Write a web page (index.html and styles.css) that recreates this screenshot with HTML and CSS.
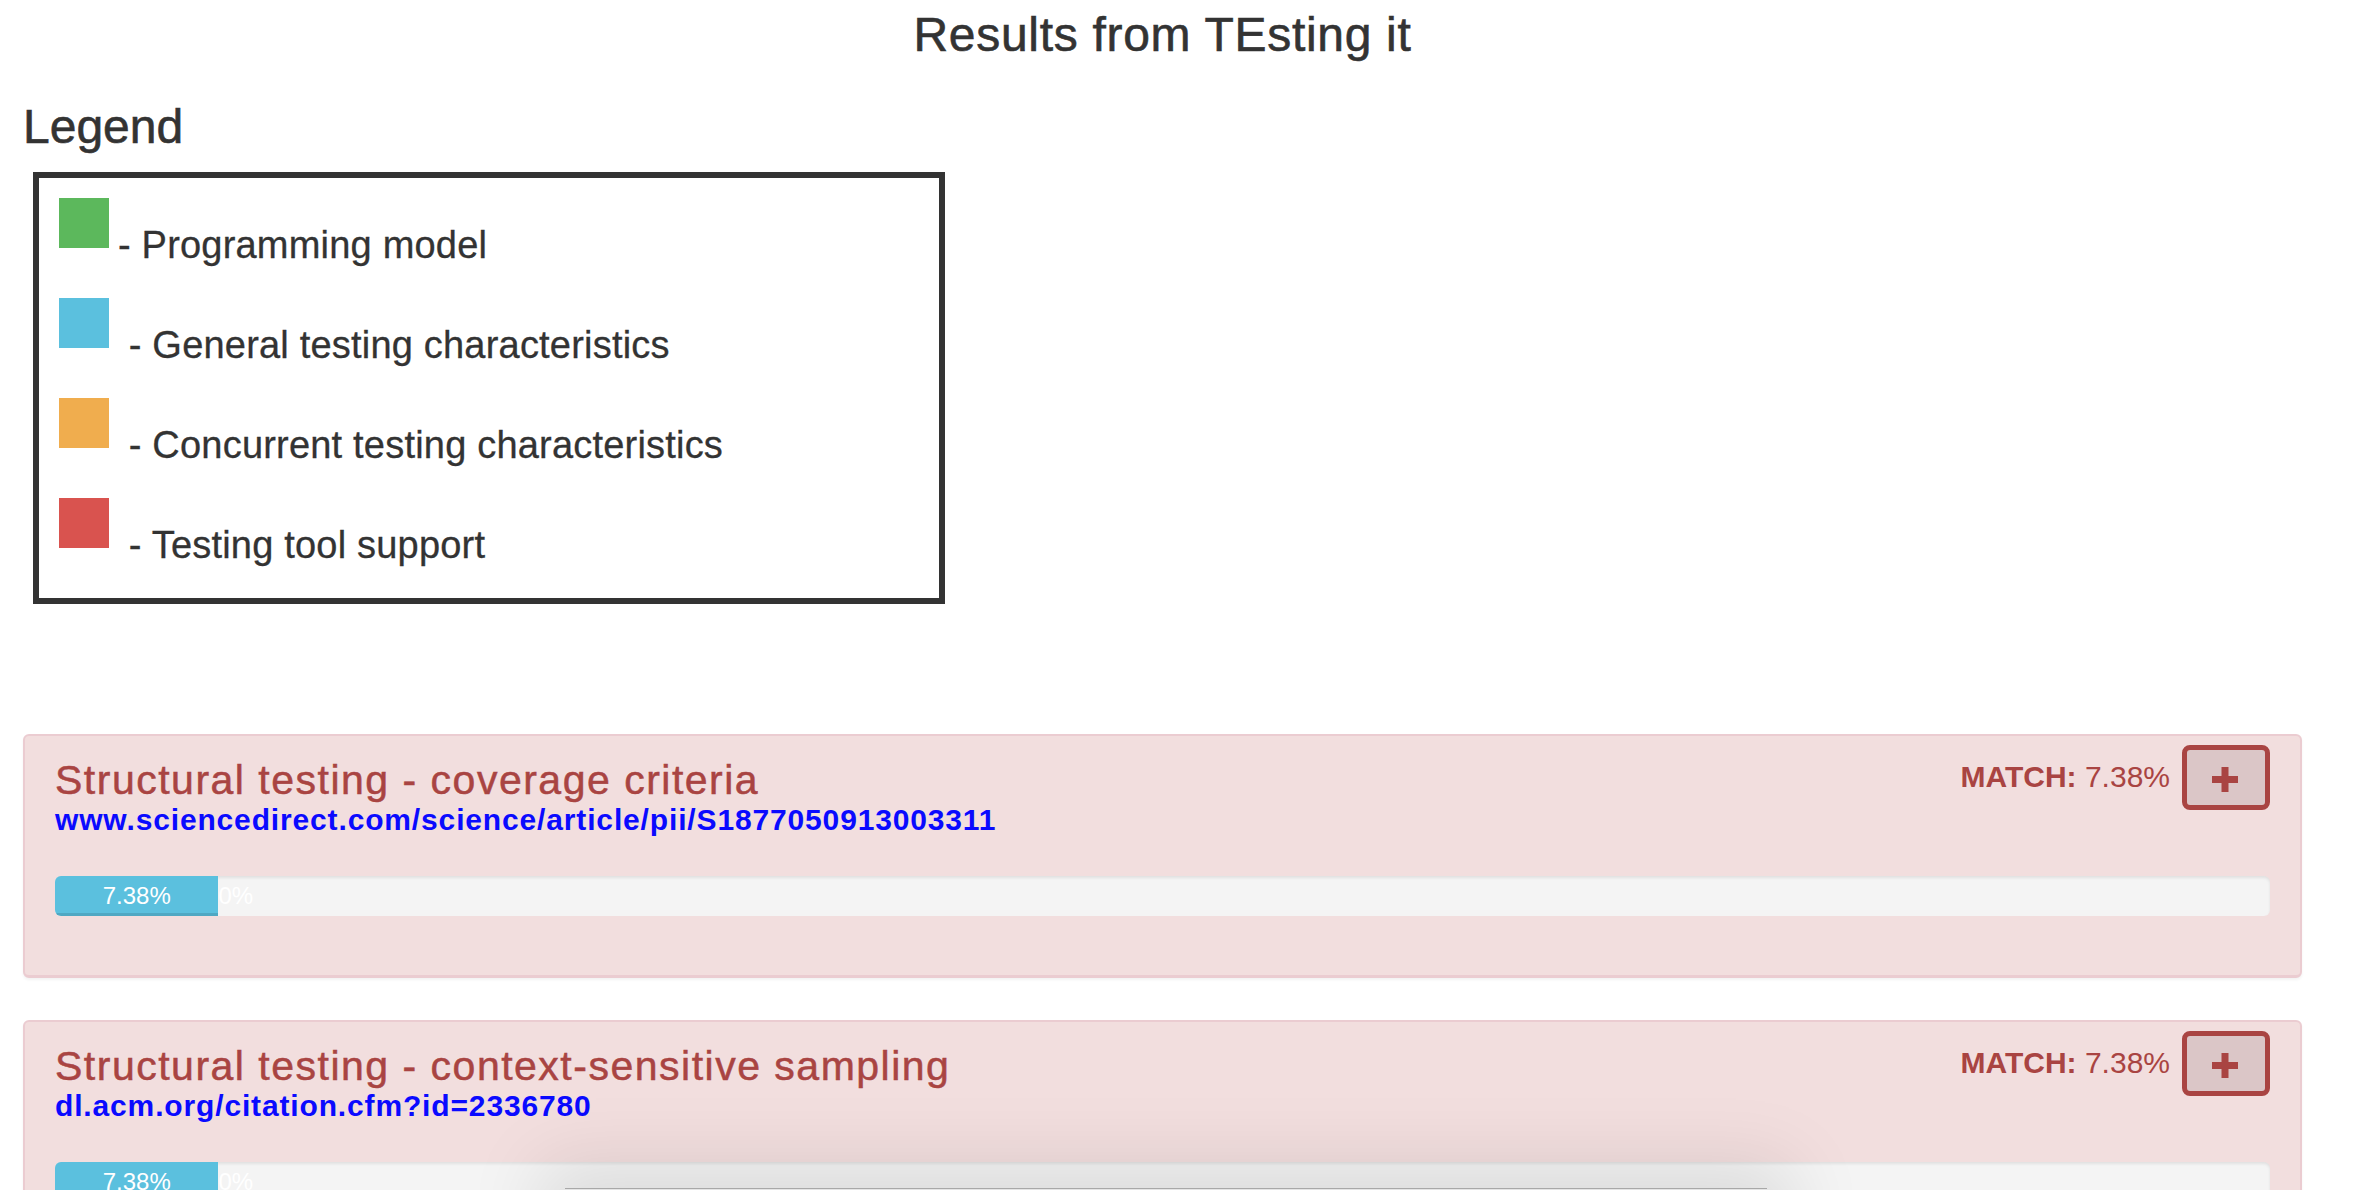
FILE: index.html
```html
<!DOCTYPE html>
<html lang="en">
<head>
    <meta charset="UTF-8">
    <meta name="viewport" content="width=device-width, initial-scale=1.0">
    <title>Results from TEsting it</title>
    <link rel="stylesheet" href="styles.css">
</head>
<body>
    <div class="container">
        <h1>Results from TEsting it</h1>

        <h2>Legend</h2>
        <div class="legend">
            <div class="legend-item"><span class="swatch green"></span>- Programming model</div>
            <div class="legend-item"><span class="swatch blue"></span> - General testing characteristics</div>
            <div class="legend-item"><span class="swatch orange"></span> - Concurrent testing characteristics</div>
            <div class="legend-item"><span class="swatch red"></span> - Testing tool support</div>
        </div>

        <div class="result">
            <div class="result-head">
                <div class="result-info">
                    <h3>Structural testing - coverage criteria</h3>
                    <a class="result-link" href="#">www.sciencedirect.com/science/article/pii/S1877050913003311</a>
                </div>
                <div class="match">
                    <span><strong>MATCH:</strong> 7.38%</span>
                    <button class="expand" aria-label="Expand">
                        <svg width="26" height="25" viewBox="0 0 26 25"><rect x="0" y="9" width="26" height="7"/><rect x="9.5" y="0" width="7" height="25"/></svg>
                    </button>
                </div>
            </div>
            <div class="progress">
                <div class="progress-bar info" style="width: 7.38%">7.38%</div>
                <div class="progress-bar empty">0%</div>
            </div>
        </div>

        <div class="result">
            <div class="result-head">
                <div class="result-info">
                    <h3>Structural testing - context-sensitive sampling</h3>
                    <a class="result-link" href="#">dl.acm.org/citation.cfm?id=2336780</a>
                </div>
                <div class="match">
                    <span><strong>MATCH:</strong> 7.38%</span>
                    <button class="expand" aria-label="Expand">
                        <svg width="26" height="25" viewBox="0 0 26 25"><rect x="0" y="9" width="26" height="7"/><rect x="9.5" y="0" width="7" height="25"/></svg>
                    </button>
                </div>
            </div>
            <div class="progress">
                <div class="progress-bar info" style="width: 7.38%">7.38%</div>
                <div class="progress-bar empty">0%</div>
            </div>
        </div>
    </div>

    <div class="popup"></div>
</body>
</html>
```

FILE: styles.css
```css
body {
    margin: 0;
    font-family: "Liberation Sans", Arial, sans-serif;
    color: #333;
    background: #fff;
}
.container {
    padding: 0 55px 0 23px;
}
h1 {
    margin: 9px 0 0;
    font-size: 48px;
    line-height: 52.8px;
    font-weight: normal;
    letter-spacing: 0.7px;
    text-align: center;
    -webkit-text-stroke: 0.6px currentColor;
}
h2 {
    margin: 39px 0 18px;
    font-size: 48px;
    line-height: 52.8px;
    font-weight: normal;
    -webkit-text-stroke: 0.6px currentColor;
}
.legend {
    box-sizing: border-box;
    width: 912px;
    margin: 0 0 130px 10px;
    padding: 20px 20px 0;
    border: 6px solid #333;
}
.legend-item {
    height: 100px;
    font-size: 38px;
    line-height: 38px;
    letter-spacing: 0.2px;
    -webkit-text-stroke: 0.3px currentColor;
}
.swatch {
    display: inline-block;
    width: 50px;
    height: 50px;
    margin: 0 9px 10px 0;
}
.green { background-color: #5cb85c; }
.blue { background-color: #5bc0de; }
.orange { background-color: #f0ad4e; }
.red { background-color: #d9534f; }

.result {
    margin-bottom: 42px;
    padding: 9px 30px 29px;
    background: #f2dede;
    border: 2px solid #ebccd1;
    border-bottom-width: 3px;
    border-radius: 6px;
    box-shadow: 0 2px 3px rgba(0, 0, 0, 0.05);
    color: #a94442;
}
.result-head {
    display: flex;
    justify-content: space-between;
    align-items: flex-start;
}
.result-info h3 {
    margin: 13px 0 0;
    font-size: 41px;
    line-height: 44px;
    font-weight: normal;
    letter-spacing: 1.5px;
    -webkit-text-stroke: 0.5px currentColor;
}
.result-link {
    display: block;
    font-size: 30px;
    line-height: 36px;
    font-weight: bold;
    letter-spacing: 0.85px;
    color: #0a0aff;
    text-decoration: none;
}
.match {
    display: flex;
    align-items: center;
    gap: 12px;
    font-size: 30px;
}
.expand {
    display: flex;
    align-items: center;
    justify-content: center;
    box-sizing: border-box;
    width: 88px;
    height: 65px;
    padding: 4px 2px 0 0;
    border: 5px solid #a94442;
    border-radius: 8px;
    background: #dbc6c7;
    fill: #a94442;
}
.progress {
    display: flex;
    height: 40px;
    margin: 38px 0 30px;
    background: #f4f4f4;
    border-radius: 6px;
    box-shadow: inset 0 2px 3px rgba(0, 0, 0, 0.08);
    overflow: hidden;
}
.progress-bar {
    font-size: 24px;
    line-height: 40px;
    color: #fff;
    white-space: nowrap;
}
.progress-bar.info {
    background: #5bc0de;
    text-align: center;
    box-shadow: inset 0 -3px 0 rgba(0, 0, 0, 0.12);
}
.progress-bar.empty {
    flex: 0 0 0;
    min-width: 0;
}
.popup {
    position: fixed;
    top: 1188px;
    left: 565px;
    width: 1202px;
    height: 300px;
    background: #e4e4e4;
    border-top: 1px solid #a8a8a8;
    box-shadow: 0 0 70px 25px rgba(0, 0, 0, 0.1);
}
```
